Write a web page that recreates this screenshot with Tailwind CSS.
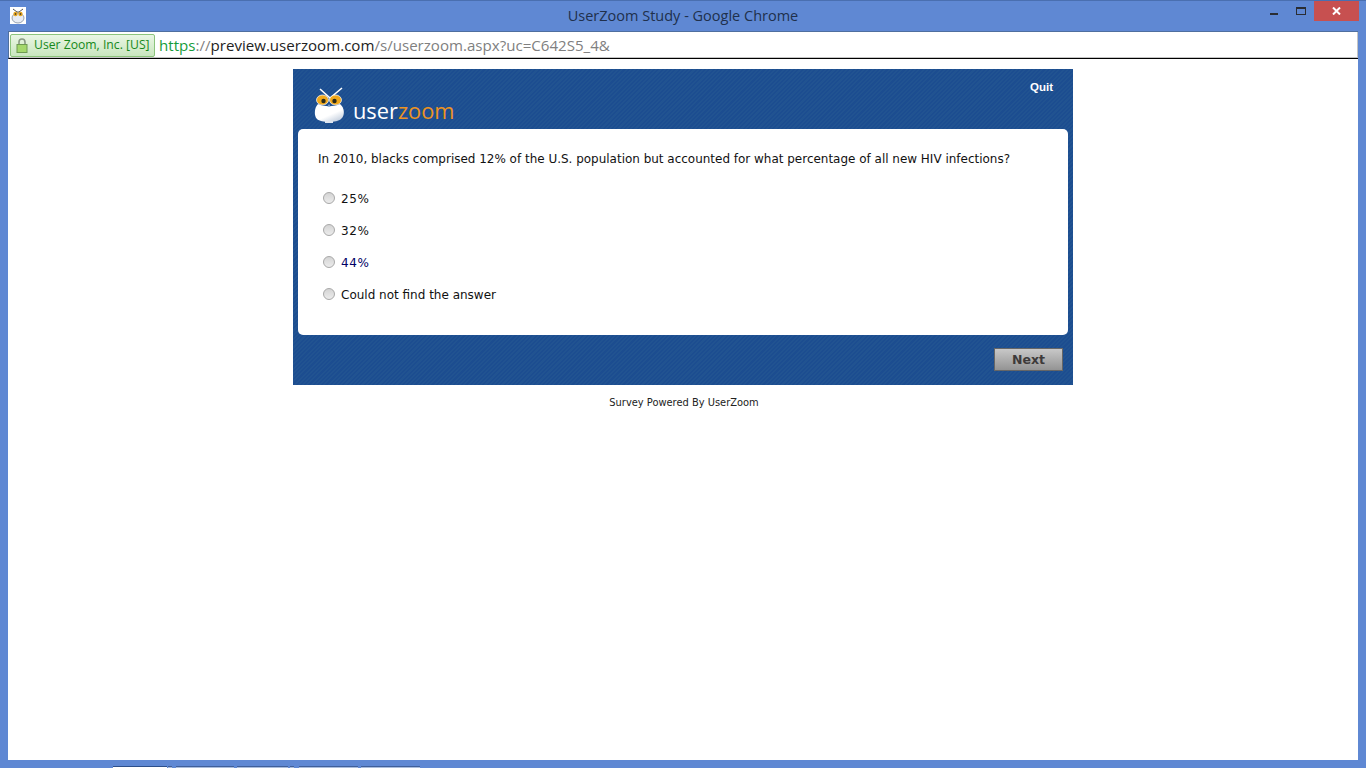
<!DOCTYPE html>
<html lang="en">
<head>
  <meta charset="UTF-8" />
  <title>UserZoom Study - Google Chrome</title>
  <script src="https://cdn.jsdelivr.net/npm/@tailwindcss/browser@4"></script>
</head>
<body class="bg-[#5f88d3] h-[768px] w-[1366px] overflow-hidden flex flex-col font-['DejaVu_Sans',sans-serif]">
  <!-- window title bar -->
  <header class="h-[31px] shrink-0 flex items-center relative border-t border-[#4a6fb0]">
    <svg class="absolute left-[10px] top-[6px]" width="16" height="17" viewBox="0 0 16 17">
      <rect width="16" height="17" fill="#fff"/>
      <path d="M3 2 L7 5 H9 L13 2" stroke="#555" stroke-width="1" fill="none"/>
      <ellipse cx="8" cy="11" rx="6" ry="5" fill="#e8ecf4" stroke="#5a6a80" stroke-width=".6"/>
      <circle cx="5.5" cy="7" r="2.2" fill="#e9a820"/>
      <circle cx="10.5" cy="7" r="2.2" fill="#e9a820"/>
      <circle cx="5.5" cy="7" r=".8" fill="#222"/>
      <circle cx="10.5" cy="7" r=".8" fill="#222"/>
    </svg>
    <div class="w-full text-center text-[14.5px] text-[#20304c] font-['Open_Sans',sans-serif]">UserZoom Study - Google Chrome</div>
    <div class="absolute right-[7px] top-0 flex items-start">
      <div class="w-[8px] h-[2px] bg-[#2a2d33] mt-[12px] mr-[18px]"></div>
      <div class="w-[10px] h-[8px] border border-[#2a2d33] border-t-[2px] mt-[6px] mr-[8px]"></div>
      <div class="w-[45px] h-[20px] bg-[#c75050] flex items-center justify-center">
        <svg width="9" height="8" viewBox="0 0 9 8"><path d="M1 0.5 L8 7.5 M8 0.5 L1 7.5" stroke="#fff" stroke-width="2"/></svg>
      </div>
    </div>
  </header>

  <!-- address bar -->
  <div class="mx-[8px] h-[28px] shrink-0 bg-white border-b border-b-black border-t border-l border-t-[#4f6f9f] border-l-[#4f6f9f] shadow-[inset_-1px_-1px_0_#c4c4c4] flex items-center pl-[1px] font-['Open_Sans',sans-serif]">
    <div class="h-[23px] w-[145px] rounded-[2px] border border-[#8cc47c] bg-gradient-to-b from-[#eaf6e4] to-[#c9e6bf] flex items-center pl-[5px] gap-[6px]">
      <svg width="12" height="15" viewBox="0 0 12 15">
        <path d="M3 7 V4 a3 3 0 0 1 6 0 V7" fill="none" stroke="#8a9a84" stroke-width="1.6"/>
        <rect x="1" y="6.5" width="10" height="8" fill="#a4d86c" stroke="#6e9a52" stroke-width="1"/>
      </svg>
      <span class="text-[12.2px] text-[#16891b] whitespace-nowrap">User Zoom, Inc. [US]</span>
    </div>
    <div class="ml-[4px] text-[15.1px] whitespace-nowrap text-[#808080]"><span class="text-[#169c3a]">https</span>://<span class="text-[#222]">preview.userzoom.com</span>/s/userzoom.aspx?uc=C642S5_4&amp;</div>
  </div>

  <!-- page -->
  <main class="mx-[8px] flex-1 bg-white flex flex-col items-center pt-[10px]">
    <section class="w-[780px] h-[316px] flex flex-col px-[5px] bg-[#1d4f92] bg-[repeating-linear-gradient(135deg,#1c4d90_0,#1c4d90_1.5px,#215391_1.5px,#215391_3px)]">
      <div class="h-[60px] shrink-0 flex items-end justify-between pb-[5px] relative">
        <div class="flex items-end pl-[16px]">
          <svg width="32" height="38" viewBox="0 0 32 38">
            <defs>
              <linearGradient id="owlBody" x1="0.2" y1="0" x2="0.9" y2="1">
                <stop offset="0.55" stop-color="#ffffff"/>
                <stop offset="1" stop-color="#b9c6d8"/>
              </linearGradient>
            </defs>
            <path d="M6 3 L16 12 L28 2" stroke="#fff" stroke-width="1.6" fill="none"/>
            <path d="M4 18 C0 22 0 30 3 33 C7 37 23 37 27 33 C31 30 31 22 26 18 C20 21 10 21 4 18 Z" fill="url(#owlBody)"/>
            <rect x="11" y="35" width="8" height="2" fill="#dfe6f0"/>
            <ellipse cx="8.5" cy="14" rx="6" ry="5" fill="#f0a81c" stroke="#fff" stroke-width=".7"/>
            <ellipse cx="21.5" cy="14" rx="6" ry="5" fill="#f0a81c" stroke="#fff" stroke-width=".7"/>
            <circle cx="9.5" cy="15" r="2.2" fill="#2b2b1a"/>
            <circle cx="20.5" cy="15" r="2.2" fill="#2b2b1a"/>
            <path d="M15 18 l-1.5 3 h3 Z" fill="#9fb6d8"/>
          </svg>
          <div class="ml-[7px] mb-[1px] text-[21.8px] leading-[24px] font-medium font-['Open_Sans',sans-serif] text-white">user<span class="text-[#ee9322]">zoom</span></div>
        </div>
        <a class="absolute right-[15px] top-[10px] text-[11.5px] font-bold text-white font-['Liberation_Sans',sans-serif]">Quit</a>
      </div>
      <div class="h-[206px] shrink-0 bg-white rounded-[5px] pt-[22px] pl-[20px] text-[12px] text-[#111]">
        <p class="leading-[15px] mb-[24px] mt-[1px] text-[11.97px]">In 2010, blacks comprised 12% of the U.S. population but accounted for what percentage of all new HIV infections?</p>
        <div class="flex flex-col gap-[16px] pl-[5px]">
          <label class="h-[16px] flex items-center gap-[6px]"><span class="w-[12px] h-[12px] -translate-y-px rounded-full border border-[#a8a8a8] bg-gradient-to-b from-[#d4d4d4] to-[#ececec]"></span><span class="tracking-[0.6px]">25%</span></label>
          <label class="h-[16px] flex items-center gap-[6px]"><span class="w-[12px] h-[12px] -translate-y-px rounded-full border border-[#a8a8a8] bg-gradient-to-b from-[#d4d4d4] to-[#ececec]"></span><span class="tracking-[0.6px]">32%</span></label>
          <label class="h-[16px] flex items-center gap-[6px] text-[#000066]"><span class="w-[12px] h-[12px] -translate-y-px rounded-full border border-[#a8a8a8] bg-gradient-to-b from-[#d4d4d4] to-[#ececec]"></span><span class="tracking-[0.6px]">44%</span></label>
          <label class="h-[16px] flex items-center gap-[6px]"><span class="w-[12px] h-[12px] -translate-y-px rounded-full border border-[#a8a8a8] bg-gradient-to-b from-[#d4d4d4] to-[#ececec]"></span>Could not find the answer</label>
        </div>
      </div>
      <div class="flex-1 flex items-start justify-end pt-[13px]">
        <button class="w-[69px] h-[23px] mr-[5px] pt-[1px] border border-[#666] bg-gradient-to-b from-[#c8c8c8] to-[#949494] text-[12.5px] font-bold text-[#3d3a3a]">Next</button>
      </div>
    </section>
    <p class="mt-[12px] ml-[2px] text-[9.9px] leading-[12px] text-[#222]">Survey Powered By UserZoom</p>
  </main>

  <!-- bottom edge, taskbar tabs peeking through -->
  <div class="h-[8px] shrink-0 relative">
    <div class="absolute bottom-0 left-[113px] flex h-[2px]">
      <div class="w-[54px] bg-white border-t border-[#2d4f8a]"></div>
      <div class="w-[4px] ml-[1px] bg-[#a9bcdc] border-t border-[#3f5f9a]"></div>
      <div class="w-[58px] ml-[4px] bg-[#a9bcdc] border-t border-[#3f5f9a]"></div>
      <div class="w-[51px] ml-[3px] bg-[#a9bcdc] border-t border-[#3f5f9a]"></div>
      <div class="w-[4px] ml-[2px] bg-[#a9bcdc] border-t border-[#3f5f9a]"></div>
      <div class="w-[59px] ml-[5px] bg-[#a9bcdc] border-t border-[#3f5f9a]"></div>
      <div class="w-[59px] ml-[3px] bg-[#a9bcdc] border-t border-[#3f5f9a]"></div>
    </div>
  </div>
</body>
</html>
